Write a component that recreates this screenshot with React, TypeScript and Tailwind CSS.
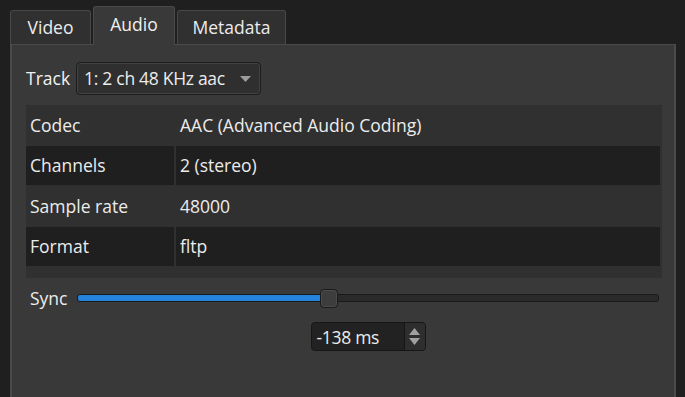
import React from "react";

const font = { fontFamily: '"Open Sans", "Noto Sans", sans-serif' };

function Tab({ label, selected, w }: { label: string; selected?: boolean; w: string }) {
  return (
    <div
      className={
        selected
          ? `relative z-10 -mb-px flex h-[39px] items-center justify-center rounded-t-[3px] border border-b-0 border-[#4a4a4a] bg-[#393939] pb-[4px] text-[17.5px] text-[#f0f0f0] ${w}`
          : `flex h-[34px] items-center justify-center rounded-t-[3px] border border-b-0 border-[#484848] bg-[#303030] text-[17.5px] text-[#ececec] ${w}`
      }
    >
      {label}
    </div>
  );
}

function Row({ k, v, dark, h }: { k: string; v: string; dark?: boolean; h: string }) {
  return (
    <div className={`flex ${h} gap-[2px] pr-[2px]`}>
      <div className={`flex w-[148px] items-center pl-[4px] ${dark ? "bg-[#1f1f1f]" : ""}`}>{k}</div>
      <div className={`flex flex-1 items-center pl-[4px] ${dark ? "bg-[#1f1f1f]" : ""}`}>{v}</div>
    </div>
  );
}

export default function App() {
  return (
    <div className="flex h-[397px] w-[685px] flex-col bg-[#1f1f1f] pl-[10px] pr-[9px] text-[17.5px] text-[#ececec]" style={font}>
      <div className="flex h-[44px] items-end gap-[2px]">
        <Tab label="Video" w="w-[81px]" />
        <Tab label="Audio" selected w="w-[82px]" />
        <Tab label="Metadata" w="w-[109px]" />
      </div>
      <div className="flex flex-1 flex-col border-x-2 border-t border-[#4a4a4a] bg-[#393939] pl-[14px] pr-[12px] pt-[17px]">
        <div className="flex items-center gap-[6px]">
          <span className="text-[17.5px] text-[#f2f2f2]">Track</span>
          <div className="flex h-[33px] w-[185px] items-center justify-between rounded-[4px] border border-[#1c1c1c] bg-[#2f2f2f] pl-[7px] pr-[9px] shadow-[inset_0_0_0_1px_#424242]">
            <span className="tracking-[-0.3px]">1: 2 ch 48 KHz aac</span>
            <svg width="11" height="6" viewBox="0 0 11 6">
              <path d="M0 0 H11 L5.5 6 Z" fill="#9c9c9c" />
            </svg>
          </div>
        </div>
        <div className="mt-[10px] flex h-[173px] flex-col bg-[#303030]">
          <Row k="Codec" v="AAC (Advanced Audio Coding)" h="h-[41px]" />
          <Row k="Channels" v="2 (stereo)" dark h="h-[39px]" />
          <Row k="Sample rate" v="48000" h="h-[42px]" />
          <Row k="Format" v="fltp" dark h="h-[39px]" />
        </div>
        <div className="mt-[7px] grid grid-cols-[51px_1fr] items-center pr-[3px]">
          <span className="pl-[4px]">Sync</span>
          <div className="relative h-[19px]">
            <div className="absolute left-0 right-0 top-[5px] h-[8px] rounded-[3px] border border-[#1a1a1a] bg-[#2a2a2a]" />
            <div className="absolute left-[1px] top-[6px] h-[6px] w-[243px] rounded-l-[2px] bg-[#2484dc]" />
            <div className="absolute left-[243px] top-0 h-[19px] w-[18px] rounded-[4px] border border-[#1a1a1a] bg-[#3d3d3d] shadow-[inset_0_0_0_1px_#4c4c4c]" />
          </div>
          <div />
          <div className="mt-[11px] flex justify-center">
            <div className="flex h-[29px] w-[115px] overflow-hidden rounded-[4px] border border-[#161616] bg-[#222222]">
              <div className="flex flex-1 items-center pl-[5px] tracking-[-0.3px]">-138 ms</div>
              <div className="flex w-[21px] flex-col items-center justify-center gap-[3px] border-l border-[#161616] bg-[#2e2e2e]">
                <svg width="11" height="7" viewBox="0 0 11 7">
                  <path d="M0 7 H11 L5.5 0 Z" fill="#a0a0a0" />
                </svg>
                <svg width="11" height="7" viewBox="0 0 11 7">
                  <path d="M0 0 H11 L5.5 7 Z" fill="#a0a0a0" />
                </svg>
              </div>
            </div>
          </div>
        </div>
      </div>
    </div>
  );
}
